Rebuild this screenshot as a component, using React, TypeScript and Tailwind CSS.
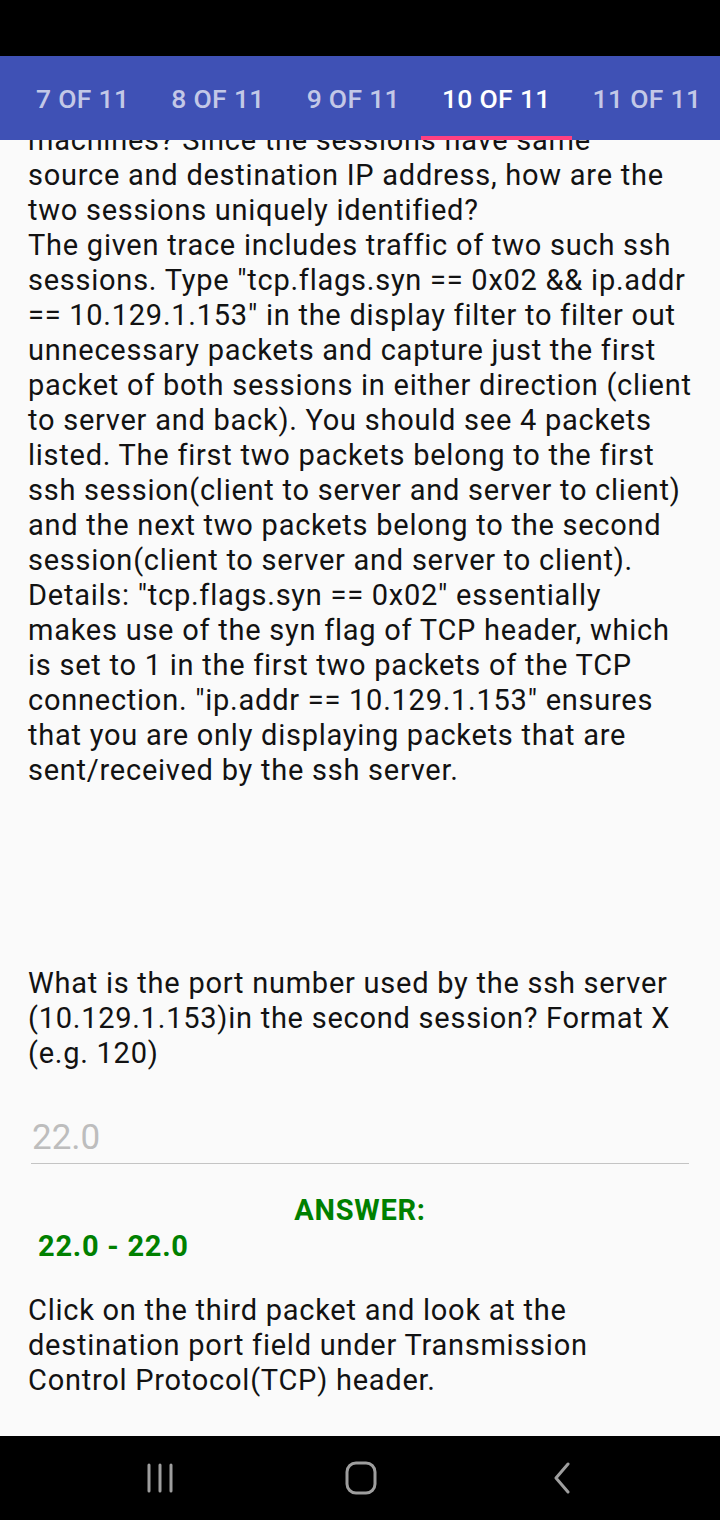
import { ReactNode } from 'react';

const tabs = ['7 OF 11', '8 OF 11', '9 OF 11', '10 OF 11', '11 OF 11'];

const intro = [
    'machines? Since the sessions have same',
    'source and destination IP address, how are the',
    'two sessions uniquely identified?',
    'The given trace includes traffic of two such ssh',
    'sessions. Type "tcp.flags.syn == 0x02 && ip.addr',
    '== 10.129.1.153" in the display filter to filter out',
    'unnecessary packets and capture just the first',
    'packet of both sessions in either direction (client',
    'to server and back). You should see 4 packets',
    'listed. The first two packets belong to the first',
    'ssh session(client to server and server to client)',
    'and the next two packets belong to the second',
    'session(client to server and server to client).',
    'Details: "tcp.flags.syn == 0x02" essentially',
    'makes use of the syn flag of TCP header, which',
    'is set to 1 in the first two packets of the TCP',
    'connection. "ip.addr == 10.129.1.153" ensures',
    'that you are only displaying packets that are',
    'sent/received by the ssh server.',
];

const question = [
    'What is the port number used by the ssh server',
    '(10.129.1.153)in the second session? Format X',
    '(e.g. 120)',
];

const hint = [
    'Click on the third packet and look at the',
    'destination port field under Transmission',
    'Control Protocol(TCP) header.',
];

function Lines({ lines, className }: { lines: string[]; className?: string }) {
    return (
        <div className={className}>
            {lines.map((line, idx) => (
                <div key={idx} className="whitespace-nowrap">{line}</div>
            ))}
        </div>
    );
}

function NavIcon({ children }: { children: ReactNode }) {
    return <div className="flex w-[80px] justify-center">{children}</div>;
}

export default function App() {
    return (
        <div className="flex h-[1520px] w-[720px] flex-col overflow-hidden bg-[#fafafa] font-['Roboto',sans-serif]">
            {/* status bar */}
            <div className="h-[56px] shrink-0 bg-black" />

            {/* tab strip */}
            <div className="relative z-10 flex h-[84px] shrink-0 bg-[#3f51b5] pl-[15px]">
                {tabs.map((tab) => {
                    const active = tab === '10 OF 11';
                    return (
                        <div
                            key={tab}
                            className={`relative flex items-center whitespace-nowrap pl-[21px] pr-[21px] pt-[1px] text-[26.5px] font-medium tracking-[0.3px] ${active ? 'text-white' : 'text-white/70'}`}
                        >
                            {tab}
                            {active && <div className="absolute bottom-0 left-0 right-0 h-[4px] bg-[#ff4081]" />}
                        </div>
                    );
                })}
            </div>

            {/* scrolled content */}
            <div className="flex-1 overflow-hidden text-[29px] leading-[35px] tracking-[0.75px] text-[#121212]">
                <Lines lines={intro} className="-mt-[17.5px] px-[28px]" />
                <Lines lines={question} className="mt-[178px] px-[28px]" />

                <div className="mx-[31px] mt-[49px] border-b-[1.5px] border-[#c4c4c4] pb-[8px] pl-[1px] text-[35px] tracking-normal text-[#bdbdbd]">22.0</div>

                <div className="mt-[29.5px] text-center font-bold text-[#008000]">ANSWER:</div>
                <div className="mt-px px-[38px] font-bold text-[#008000]">22.0 - 22.0</div>

                <Lines lines={hint} className="mt-[29px] px-[28px]" />
            </div>

            {/* navigation bar */}
            <div className="flex h-[84px] shrink-0 items-center gap-[121px] bg-black pl-[120px]">
                <NavIcon>
                    <svg width="28" height="30" viewBox="0 0 28 30" fill="none" stroke="#9e9e9e" strokeWidth="3" strokeLinecap="round">
                        <path d="M3 2v26M14 2v26M25 2v26" />
                    </svg>
                </NavIcon>
                <NavIcon>
                    <svg width="32" height="34" viewBox="0 0 32 34" fill="none" stroke="#9e9e9e" strokeWidth="3">
                        <rect x="2" y="2" width="28" height="30" rx="9" />
                    </svg>
                </NavIcon>
                <NavIcon>
                    <svg width="18" height="32" viewBox="0 0 18 32" fill="none" stroke="#9e9e9e" strokeWidth="3" strokeLinecap="round" strokeLinejoin="round">
                        <path d="M15 2L3 16l12 14" />
                    </svg>
                </NavIcon>
            </div>
        </div>
    );
}
